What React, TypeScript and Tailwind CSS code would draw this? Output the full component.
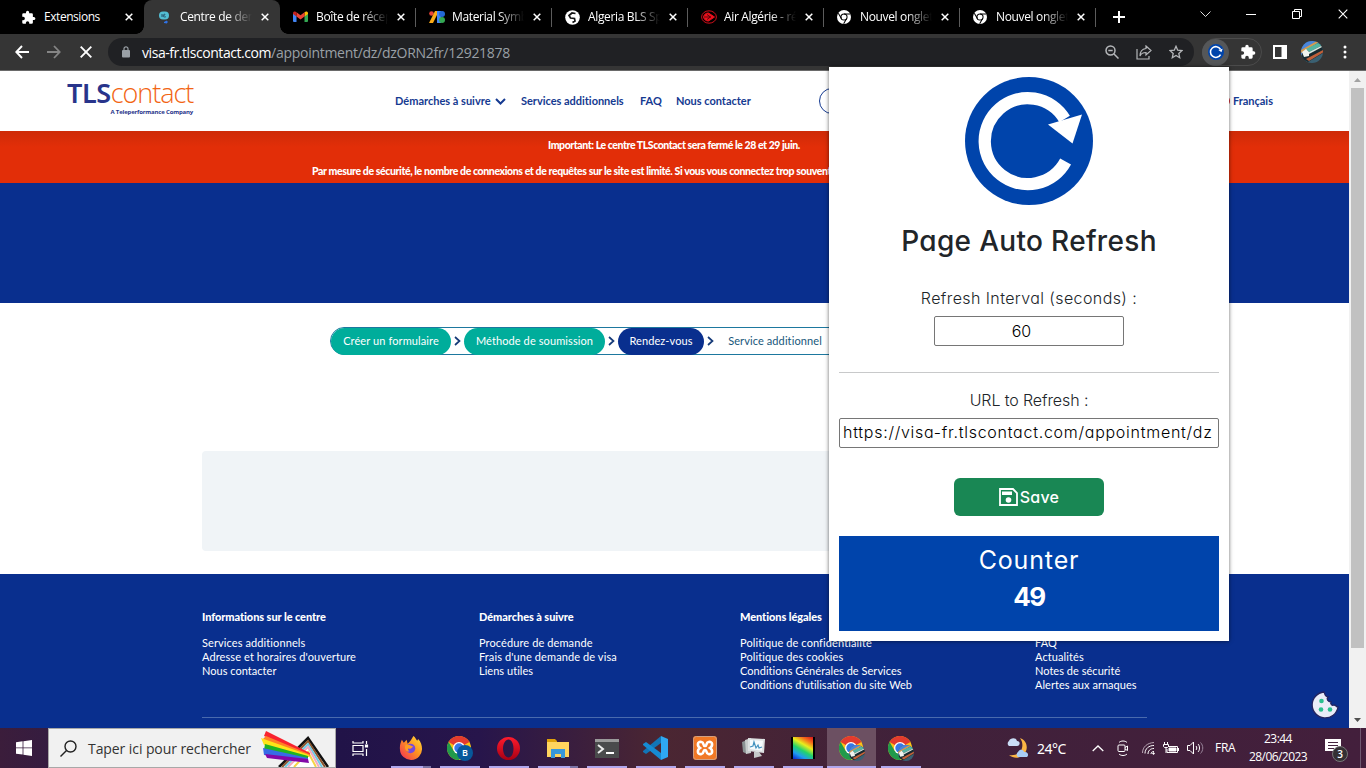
import React from "react";

const UI = "font-['Open_Sans','Noto_Sans',sans-serif]";
const SITE = "font-['Lato',sans-serif]";
const POP = "font-['Inter',sans-serif] [font-feature-settings:'cv11','ss03']";

const PUZZLE =
  "M20.5 11H19V7a2 2 0 0 0-2-2h-4V3.500a2.500 2.500 0 0 0-5 0V5H4a2 2 0 0 0-2 2v3.800h1.500a2.700 2.700 0 0 1 0 5.400H2V20a2 2 0 0 0 2 2h3.800v-1.500a2.700 2.700 0 0 1 5.400 0V22H17a2 2 0 0 0 2-2v-4h1.500a2.500 2.500 0 0 0 0-5z";

function Puzzle({ size }: { size: number }) {
  return (
    <svg width={size} height={size} viewBox="0 0 24 24" fill="#fff">
      <path d={PUZZLE} />
    </svg>
  );
}

function ChromeMono() {
  return (
    <svg width="14" height="14" viewBox="0 0 16 16">
      <circle cx="8" cy="8" r="8" fill="#fff" />
      <circle cx="8" cy="8" r="3.500" fill="none" stroke="#000" strokeWidth="1.200" />
      <path d="M8 4.500h7.200M5 9.800L1.500 3.800M11 9.800L7.600 15.700" stroke="#000" strokeWidth="1.200" />
    </svg>
  );
}

function Train({ size, id }: { size: number; id: string }) {
  return (
    <svg width={size} height={size} viewBox="0 0 22 22">
      <clipPath id={id}>
        <circle cx="11" cy="11" r="11" />
      </clipPath>
      <g clipPath={`url(#${id})`}>
        <path d="M0 0h22v22H0z" fill="#3a6072" />
        <path d="M0 0h22v4L0 14z" fill="#4a86dc" />
        <path d="M0 9L16 0h4L0 12z" fill="#d49a4d" />
        <path d="M1 12L17 2l5 3v7L7 21l-6-3z" fill="#182a30" />
        <path d="M5 8L17 2l5 2-14 7z" fill="#53b5a1" />
        <path d="M1 11l4-3 3 3v4l-5 1z" fill="#f0f3ee" />
        <path d="M8 11l14-7v1.500L8 13z" fill="#d7e6df" />
        <path d="M5 18L22 9v2.500L8 20z" fill="#c0603a" />
      </g>
    </svg>
  );
}

function ChromeIcon({ badge, id }: { badge: "B" | "train"; id: string }) {
  return (
    <div className="relative h-[25px] w-[25px]">
      <svg width="24" height="24" viewBox="0 0 24 24">
        <circle cx="12" cy="12" r="12" fill="#fbc116" />
        <path d="M12 12L1.600 6A12 12 0 0 1 22.400 6z" fill="#e33b2e" />
        <path d="M1.600 6A12 12 0 0 0 12 24l5.200-9H6.800z" fill="#229a4b" />
        <circle cx="12" cy="12" r="6" fill="#fff" />
        <circle cx="12" cy="12" r="4.700" fill="#3778e6" />
      </svg>
      {badge === "B" ? (
        <span className={`absolute left-[10px] top-[9px] flex h-4 w-4 items-center justify-center rounded-full bg-[#07579b] text-[9px] font-semibold text-white ${UI}`}>B</span>
      ) : (
        <span className="absolute left-[10px] top-[9px]">
          <Train size={16} id={id} />
        </span>
      )}
    </div>
  );
}

function Cross({ size, w = 1.5 }: { size: number; w?: number }) {
  return (
    <svg width={size} height={size} viewBox={`0 0 ${size} ${size}`} stroke="#fff" strokeWidth={w} fill="none">
      <path d={`M.7.7L${size - 0.7} ${size - 0.7}M${size - 0.7}.7L.7 ${size - 0.7}`} />
    </svg>
  );
}

const tabs = [
  { t: "Extensions", icon: <Puzzle size={15} /> },
  {
    t: "Centre de dem",
    active: true,
    icon: (
      <svg width="16" height="16" viewBox="0 0 16 16">
        <rect x="2" y="2.500" width="10" height="8" rx="4" fill="#53bed3" />
        <path d="M5 5v3M6.500 5.500c2-1 2 1 0 1s1 2.500 2.500 1" stroke="#24516b" fill="none" />
        <path d="M7 13.500l3-1.500v2z" fill="#2f75ec" stroke="#2f75ec" />
      </svg>
    ),
  },
  {
    t: "Boîte de récept",
    icon: (
      <svg width="15" height="12" viewBox="0 0 15 12">
        <path d="M0 2l3.500 2.600V11H1a1 1 0 0 1-1-1z" fill="#4285f4" />
        <path d="M15 2l-3.500 2.600V11H14a1 1 0 0 0 1-1z" fill="#34a853" />
        <path d="M11.500 1.200C13 0 15 .5 15 2.200V3l-3.500 2.600z" fill="#fbbc04" />
        <path d="M3.500 1.200l4 3 4-3v4.400l-4 3-4-3z" fill="#ea4335" />
        <path d="M0 2.200C0 .5 2 0 3.500 1.200v4.400L0 3z" fill="#c5221f" />
      </svg>
    ),
  },
  {
    t: "Material Symbo",
    icon: (
      <svg width="16" height="12" viewBox="0 0 16 12">
        <circle cx="2.500" cy="2.500" r="2.300" fill="#ea4335" />
        <path d="M6 0h4L4 12H0z" fill="#fbab16" />
        <path d="M8 0h4v12H8z" fill="#4285f4" />
        <circle cx="13" cy="3" r="3" fill="#2369d6" />
        <circle cx="13" cy="9" r="3" fill="#34a853" />
      </svg>
    ),
  },
  {
    t: "Algeria BLS Spa",
    icon: (
      <svg width="15" height="15" viewBox="0 0 15 15">
        <circle cx="7.500" cy="7.500" r="7.300" fill="#fff" />
        <path d="M10.500 3.500L7 3 4 5.500 5.500 8l4 .5.5 2.500-2.500 1.500" stroke="#151515" strokeWidth="1.700" fill="none" />
      </svg>
    ),
  },
  {
    t: "Air Algérie - rés",
    icon: (
      <svg width="16" height="16" viewBox="0 0 16 16" fill="none" stroke="#e5101c">
        <ellipse cx="8" cy="8" rx="7.400" ry="6.200" strokeWidth=".9" />
        <path d="M2.500 8c1-4 4-4 5-4l6 4-6 4c-1 0-4 0-5-4z" fill="#f0101c" />
        <path d="M3 8h7M6 5.500L9.500 8 6 10.500" stroke="#260004" strokeWidth=".7" />
      </svg>
    ),
  },
  { t: "Nouvel onglet", icon: <ChromeMono /> },
  { t: "Nouvel onglet", icon: <ChromeMono /> },
];

function TabStrip() {
  return (
    <div className={`flex h-[34px] bg-black pl-2 text-white ${UI}`}>
      {tabs.map((tab, i) => (
        <div
          key={i}
          className={
            tab.active
              ? "relative flex h-[34px] w-[136px] shrink-0 items-center rounded-t-lg bg-[#353535] pl-[13px]"
              : "relative flex h-[34px] w-[136px] shrink-0 items-center pl-[13px]"
          }
        >
          {tab.active && (
            <>
              <span className="absolute -left-2 bottom-0 h-2 w-2 bg-[radial-gradient(circle_at_0_0,transparent_7.500px,#353535_8px)]" />
              <span className="absolute -right-2 bottom-0 h-2 w-2 bg-[radial-gradient(circle_at_0_0,transparent_7.500px,#353535_8px)] -scale-x-100" />
            </>
          )}
          <span className="flex w-[23px]">{tab.icon}</span>
          <span
            className={
              i === 0
                ? "w-[73px] overflow-hidden whitespace-nowrap text-[12px] tracking-[-0.45px]"
                : "w-[73px] overflow-hidden whitespace-nowrap text-[12px] tracking-[-0.35px] [mask-image:linear-gradient(to_right,#000_46px,transparent_72px)]"
            }
          >
            {tab.t}
          </span>
          <span className="ml-[8px]">
            <Cross size={8} />
          </span>
          {i > 1 && <span className="absolute right-0 top-2 h-[19px] w-px bg-[#5c5c5c]" />}
        </div>
      ))}
      <div className="flex h-[34px] w-[46px] items-center justify-center">
        <svg width="12" height="12" viewBox="0 0 12 12" stroke="#fff" strokeWidth="2"><path d="M6 0v12M0 6h12" /></svg>
      </div>
      <div className="ml-auto flex h-7">
        <div className="flex w-[46px] items-center justify-center">
          <svg width="11" height="7" viewBox="0 0 11 7" fill="none" stroke="#ddd"><path d="M.5.5l5 5 5-5" /></svg>
        </div>
        <div className="flex w-[46px] items-center justify-center">
          <svg width="10" height="2" viewBox="0 0 10 2"><path d="M0 1h10v1H0z" fill="#fff" /></svg>
        </div>
        <div className="flex w-[46px] items-center justify-center">
          <svg width="10" height="10" viewBox="0 0 10 10" fill="none" stroke="#fff"><path d="M.5 2.500h7v7h-7zM2.500 2.500v-2h7v7h-2" /></svg>
        </div>
        <div className="flex w-[46px] items-center justify-center">
          <Cross size={10} w={1.1} />
        </div>
      </div>
    </div>
  );
}

function Toolbar() {
  return (
    <div className={`flex h-9 items-center bg-[#353535] pl-[15px] ${UI}`}>
      <svg width="14" height="14" viewBox="0 0 14 14" fill="none" stroke="#fff" strokeWidth="1.900"><path d="M14 7H1.500M7 1L1.300 7 7 13" /></svg>
      <svg className="ml-[18px]" width="14" height="14" viewBox="0 0 14 14" fill="none" stroke="#858585" strokeWidth="1.800"><path d="M0 7h12.500M7 1l5.700 6L7 13" /></svg>
      <span className="ml-[19px]"><Cross size={12} w={1.9} /></span>
      <div className="ml-[16px] flex h-7 w-[1086px] items-center rounded-full bg-[#202124] pl-[14px]">
        <svg width="8" height="12" viewBox="0 0 8 12"><rect y="4" width="8" height="7.500" rx="1" fill="#9aa0a6" /><path d="M2 4.500V2.800a2 2 0 0 1 4 0v1.700" fill="none" stroke="#9aa0a6" strokeWidth="1.200" /></svg>
        <span className="ml-[12px] whitespace-nowrap text-[14px] text-[#9aa0a6]">
          <span className="tracking-[-0.44px] text-white">visa-fr.tlscontact.com</span>
          <span className="tracking-[-0.28px]">/appointment/dz/dzORN2fr/12921878</span>
        </span>
        <div className="ml-auto flex items-center pr-[11px]">
          <svg width="14" height="14" viewBox="0 0 14 14" fill="none" stroke="#b5b7ba" strokeWidth="1.500"><circle cx="5.500" cy="5.500" r="4.500" /><path d="M9 9l4.500 4.500M3.300 5.500h4.400" /></svg>
          <svg className="ml-[17px]" width="16" height="15" viewBox="0 0 16 15" fill="none" stroke="#b5b7ba" strokeWidth="1.200"><path d="M1 4v10h12v-3M10 1l5 4.500L10 10V7.500C7 7.500 5 8.500 4 11c0-4 2-7 6-7.500z" /></svg>
          <svg className="ml-[17px]" width="14" height="14" viewBox="0 0 14 14" fill="none" stroke="#b5b7ba" strokeWidth="1.300"><path d="M7 1.300l1.700 3.900 4.300.4-3.200 2.900.9 4.200L7 10.500l-3.700 2.200.9-4.200L1 5.600l4.300-.4z" /></svg>
        </div>
      </div>
      <div className="ml-[8px] flex h-7 w-[60px] items-center rounded-full border border-[#4b4b4b]">
        <span className="-ml-px flex h-[27px] w-[27px] items-center justify-center rounded-full bg-[#555759]">
          <RefreshLogo size={16} />
        </span>
        <span className="ml-[11px]"><Puzzle size={16} /></span>
      </div>
      <svg className="ml-[11px]" width="14" height="14" viewBox="0 0 14 14"><path d="M0 0h14v14H0zM2 2v10h6.500V2z" fill="#fff" fillRule="evenodd" /></svg>
      <span className="ml-[14px]"><Train size={22} id="av" /></span>
      <svg className="ml-[20px]" width="4" height="14" viewBox="0 0 4 14" fill="#fff"><circle cx="2" cy="2" r="1.500" /><circle cx="2" cy="7" r="1.500" /><circle cx="2" cy="12" r="1.500" /></svg>
    </div>
  );
}

function RefreshLogo({ size }: { size: number }) {
  return (
    <svg width={size} height={size} viewBox="0 0 128 128">
      <circle cx="64" cy="64" r="64" fill="#0044ab" />
      <path d="M99.600 42A43 43 0 1 0 100.600 84.500" fill="none" stroke="#fff" strokeWidth="12.300" />
      <path d="M117 37.500L83 47.500l24.500 19z" fill="#fff" />
    </svg>
  );
}

const steps = [
  { t: "Créer un formulaire", c: "flex h-[27px] w-[120px] items-center justify-center rounded-full bg-[#00ad9b] text-white" },
  { t: "Méthode de soumission", c: "flex h-[27px] w-[141px] items-center justify-center rounded-full bg-[#00ad9b] text-white" },
  { t: "Rendez-vous", c: "flex h-[27px] w-[86px] items-center justify-center rounded-full bg-[#092f8e] text-white" },
  { t: "Service additionnel", c: "flex h-[27px] w-[116px] items-center justify-center text-[#17577b]" },
];

const footer = [
  { w: "w-[277px]", h: "Informations sur le centre", l: ["Services additionnels", "Adresse et horaires d'ouverture", "Nous contacter"] },
  { w: "w-[261px]", h: "Démarches à suivre", l: ["Procédure de demande", "Frais d'une demande de visa", "Liens utiles"] },
  { w: "w-[295px]", h: "Mentions légales", l: ["Politique de confidentialité", "Politique des cookies", "Conditions Générales de Services", "Conditions d'utilisation du site Web"] },
  { w: "w-[110px]", h: "Informations", l: ["FAQ", "Actualités", "Notes de sécurité", "Alertes aux arnaques"] },
];

function Site() {
  return (
    <div className={`relative flex w-[1349px] flex-col bg-white text-[11px] ${SITE}`}>
      <header className="flex h-[60px] text-[#153a91]">
        <div className="flex w-[395px] flex-col pl-[67px] pt-[8px]">
          <div className="flex items-baseline whitespace-nowrap font-['Noto_Sans',sans-serif] text-[27px] leading-[28px]">
            <span className="font-semibold tracking-[-0.4px] text-[#28348b]">TLS</span>
            <span className="font-['Open_Sans',sans-serif] text-[27px] font-light tracking-[-1.050px] text-[#f26514]">contact</span>
          </div>
          <div className="mt-px w-[126px] text-right font-['Open_Sans',sans-serif] text-[6px] font-bold leading-[8px] tracking-[-0.17px] text-[#28348b]">A Teleperformance Company</div>
        </div>
        <nav className="flex items-center whitespace-nowrap font-bold tracking-[-0.02px]">
          <span className="flex w-[126px] items-center">
            <span className="tracking-[0px]">Démarches à suivre</span>
            <svg className="ml-[4px]" width="11" height="7" viewBox="0 0 11 7" fill="none" stroke="#153a91" strokeWidth="2"><path d="M1 1l4.500 4.500L10 1" /></svg>
          </span>
          <span className="w-[119px]">Services additionnels</span>
          <span className="w-[36px]">FAQ</span>
          <span className="w-[143px]">Nous contacter</span>
          <span className="h-[26px] w-[120px] rounded-full border border-[#153a91]" />
          <span className="ml-[275px] h-3 w-4 rounded-full bg-[#d22630]" />
          <span className="ml-[3px]">Français</span>
        </nav>
      </header>
      <div className="flex h-[52px] flex-col bg-[linear-gradient(to_bottom,#ce2b08,#e22e08_16px)] text-[10.500px] font-black text-white">
        <p className="whitespace-nowrap pl-[548px] pt-[5px] leading-[18px] tracking-[-0.43px]">Important: Le centre TLScontact sera fermé le 28 et 29 juin.</p>
        <p className="overflow-hidden whitespace-nowrap pl-[312px] pt-[8px] leading-[18px] tracking-[-0.39px]">Par mesure de sécurité, le nombre de connexions et de requêtes sur le site est limité. Si vous vous connectez trop souvent</p>
      </div>
      <div className="h-[120px] bg-[#092f8e]" />
      <div className="flex h-[271px] flex-col pt-6">
        <div className="ml-[330px] flex h-[28px] w-[690px] items-center rounded-full border border-[#1d789f] tracking-[0.1px]">
          {steps.map((s) => (
            <React.Fragment key={s.t}>
              <span className={s.c}>{s.t}</span>
              <span className="flex w-[13px] justify-center">
                <svg width="7" height="10" viewBox="0 0 7 10" fill="none" stroke="#153a78" strokeWidth="1.700"><path d="M1 1l4.500 4L1 9" /></svg>
              </span>
            </React.Fragment>
          ))}
        </div>
        <div className="ml-[202px] mt-[96px] h-[100px] w-[945px] rounded bg-[#f0f4f7]" />
      </div>
      <footer className="flex h-[154px] flex-col bg-[#092f8e] px-[202px] pt-[36px] text-white">
        <div className="flex h-[107px]">
          {footer.map((f) => (
            <div key={f.h} className={`${f.w} shrink-0 whitespace-nowrap leading-[14px]`}>
              <h3 className="mb-3 font-black tracking-[-0.08px]">{f.h}</h3>
              {f.l.map((x, i) => (
                <p key={x} className={i > 1 ? "tracking-[0.03px]" : "tracking-[0.1px]"}>{x}</p>
              ))}
            </div>
          ))}
        </div>
        <div className="h-px bg-[#496aae]" />
      </footer>
      <svg className="absolute bottom-[9px] right-[10px]" width="28" height="28" viewBox="0 0 28 28">
        <path d="M13 1a13 13 0 1 0 14 15c-2 0-2-2-4-2-2 1-4-1-3-3-3 0-5-3-3-5-3 0-3-3-4-5z" fill="#e9ecf7" stroke="#24245f" strokeWidth="1.300" />
        <circle cx="10.500" cy="10" r="2.300" fill="#29bf8e" /><circle cx="10" cy="18.500" r="2.300" fill="#29bf8e" /><circle cx="19" cy="18.500" r="2.300" fill="#29bf8e" />
      </svg>
    </div>
  );
}

function Popup() {
  return (
    <section className={`absolute left-[829px] top-[67px] flex h-[574px] w-[400px] flex-col items-center bg-white px-[10px] pt-[10px] text-[#212529] shadow-[0_0_4px_rgba(0,0,0,0.6)] ${POP}`}>
      <RefreshLogo size={128} />
      <h1 className="mt-[18px] whitespace-nowrap text-[28px] font-medium leading-[36px] tracking-[0.32px]">Page Auto Refresh</h1>
      <label className="mt-[27px] whitespace-nowrap text-[16px] font-light leading-6 tracking-[0.4px]">Refresh Interval (seconds) :</label>
      <div className="mt-[6px] flex h-[30px] w-[190px] items-center justify-center rounded-[2px] border border-[#767676] pb-px pr-[15px] text-[16px] font-light text-black">60</div>
      <div className="mt-[26px] h-px w-full bg-[#c8c9ca]" />
      <label className="mt-[15px] whitespace-nowrap text-[16px] font-light leading-6 tracking-[-0.1px]">URL to Refresh :</label>
      <div className="mt-[6px] h-[30px] w-full rounded-[2px] border border-[#767676] px-[3px]">
        <div className="overflow-hidden whitespace-nowrap text-[16px] font-light leading-[27px] tracking-[0.73px] text-black">https://visa-fr.tlscontact.com/appointment/dz</div>
      </div>
      <button className="mt-[30px] flex h-[38px] w-[150px] shrink-0 items-center justify-center rounded-md bg-[#198754] pb-px text-[16px] font-medium tracking-[0.2px] text-white">
        <svg className="mr-[2px]" width="19" height="18" viewBox="0 0 19 18"><path d="M1 1h13l4 4v12H1z" fill="none" stroke="#fff" strokeWidth="1.800" /><path d="M3 3.500h10v3.500H3z" fill="#fff" /><circle cx="9.500" cy="12" r="2.800" fill="#fff" /></svg>
        Save
      </button>
      <div className="mt-[20px] flex h-[95px] w-full flex-col items-center bg-[#0044ab] text-white">
        <span className="mt-[6px] text-[25px] leading-9 tracking-[0.85px]">Counter</span>
        <span className="text-[26px] font-bold leading-[38px] tracking-[-1.500px]">49</span>
      </div>
    </section>
  );
}

const apps = [
  {
    k: "firefox",
    two: true,
    el: (
      <svg width="23" height="24" viewBox="0 0 24 25">
        <defs><linearGradient id="ff" x1="1" y1="0" x2="0" y2="1"><stop offset="0" stopColor="#ffe23c" /><stop offset=".45" stopColor="#ff9420" /><stop offset="1" stopColor="#f0275b" /></linearGradient></defs>
        <path d="M15 0c2 1 3 4 4 5l1-2c3 3 4 7 4 10a11.500 11.500 0 0 1-23 1C.5 10 2 6 3 4l2 3 3-3 1 4c3-2 4-5 6-8z" fill="url(#ff)" />
        <circle cx="12" cy="13" r="5" fill="#744add" /><path d="M7 9c3-1 5 1 8 2-2 1-2 3-5 2-1 0-1 2 1 3-4 1-6-4-4-7z" fill="#ff9c22" />
      </svg>
    ),
  },
  { k: "chrome-b", el: <ChromeIcon badge="B" id="t0" /> },
  {
    k: "opera",
    el: (
      <svg width="23" height="23" viewBox="0 0 23 23"><defs><linearGradient id="op" x1="0" y1="0" x2="0" y2="1"><stop stopColor="#ff1b2d" /><stop offset="1" stopColor="#a70014" /></linearGradient></defs><path fillRule="evenodd" d="M11.500 0a11.500 11.500 0 1 0 0 23 11.500 11.500 0 0 0 0-23zm0 2.500c3 0 5 4 5 9s-2 9-5 9-5.500-4-5.500-9 2.500-9 5.500-9z" fill="url(#op)" /></svg>
    ),
  },
  {
    k: "files",
    two: true,
    el: (
      <svg width="22" height="19" viewBox="0 0 22 19"><path d="M0 0h8l2 2v4H0z" fill="#dfa10a" /><path d="M0 3h22v15H0z" fill="#ffd45e" /><path d="M4 19v-9h14v9h-4v-4H8v4z" fill="#3897da" /></svg>
    ),
  },
  {
    k: "terminal",
    el: (
      <svg width="24" height="19" viewBox="0 0 24 19"><path d="M0 0h24v19H0z" fill="#4a4b4c" /><path d="M0 0h24v3H0z" fill="#9a9a9a" /><path d="M3 6l5 4-5 4" fill="none" stroke="#eee" strokeWidth="2" /><path d="M11 14h8" stroke="#fff" strokeWidth="2" /></svg>
    ),
  },
  {
    k: "code",
    el: (
      <svg width="25" height="24" viewBox="0 0 25 24"><path d="M18 0v7L3 18 0 16v-1z" fill="#1175b7" /><path d="M18 24v-7L3 6 0 8v1z" fill="#168bd3" /><path d="M18 0l7 3v18l-7 3z" fill="#2fa8f2" /></svg>
    ),
  },
  {
    k: "xampp",
    el: (
      <svg width="24" height="24" viewBox="0 0 24 24"><rect width="24" height="24" rx="3" fill="#f17825" /><rect x=".5" y=".5" width="23" height="23" rx="3" fill="none" stroke="#d1a083" /><path d="M8.500 6C4 5 4 10 7 12c-3 2-3 7 1.500 6 3-.5 1-4 3.500-4s.5 3.500 3.500 4c4.500 1 4.500-4 1.500-6 3-2 3-7-1.500-6-3 .5-1 4-3.500 4s-.5-3.500-3.500-4z" fill="none" stroke="#fff" strokeWidth="2.600" /></svg>
    ),
  },
  {
    k: "monitor",
    el: (
      <svg width="23" height="22" viewBox="0 0 23 22"><path d="M0 5l5-2v14l-4-2z" fill="#8b9294" /><path d="M3 3l6-2v15l-5 1z" fill="#c7cbcc" /><path d="M6 1l17 1-1 14-16-2z" fill="#dde1e2" /><path d="M8 3l13 .7-1 10L8 12z" fill="#f6fbfd" /><path d="M8 10l3-1 1-4 2 6 2-3 1 3 3-1" fill="none" stroke="#4292bf" strokeWidth="1.200" /><path d="M12 15h5l3 4-8 2z" fill="#c6c9ca" /></svg>
    ),
  },
  {
    k: "gradient",
    el: (
      <div className="flex h-[22px] w-6 border-x-2 border-dotted border-black bg-black"><span className="h-full w-full bg-[linear-gradient(30deg,#0b22cf,#1f9cf0_22%,#22d36b_42%,#e8ee1d_62%,#f5721b_80%,#d9101c)]" /></div>
    ),
  },
  { k: "chrome-1", active: true, el: <ChromeIcon badge="train" id="t1" /> },
  { k: "chrome-2", el: <ChromeIcon badge="train" id="t2" /> },
];

function Taskbar() {
  return (
    <div className={`flex h-10 bg-[linear-gradient(to_right,#3b1d3b_0,#351c40_48px,#211348_340px,#27154b_480px,#4b2632_660px,#40213a_900px,#431f3c_1366px)] text-white ${UI}`}>
      <div className="flex w-12 items-center justify-center">
        <svg width="16" height="16" viewBox="0 0 16 16" fill="#fff"><path d="M0 2.200l6.600-.9v6.200H0zM7.400 1.200L16 0v7.500H7.400zM0 8.300h6.600v6.200L0 13.700zM7.400 8.300H16V16l-8.600-1.200z" /></svg>
      </div>
      <div className="flex w-[288px] items-center border border-[#a8a8a8] bg-[#f1f1f1] pl-[11px]">
        <svg width="17" height="17" viewBox="0 0 17 17" fill="none" stroke="#222" strokeWidth="1.400"><circle cx="10.500" cy="6.500" r="5.500" /><path d="M6.500 10.500l-6 6" /></svg>
        <span className="ml-[11px] w-[164px] whitespace-nowrap text-[14px] tracking-[-0.08px] text-[#333]">Taper ici pour rechercher</span>
        <svg className="self-start" width="80" height="38" viewBox="0 0 80 38">
          <path d="M27 38L56 9l12 29" fill="#fff" />
          <path d="M27 38L56 9l20 29" fill="none" stroke="#111" strokeWidth="2.500" /><path d="M30 38l26-26 17 26" fill="none" stroke="#8a532b" strokeWidth="2" /><path d="M33 38l23-23 14 23" fill="none" stroke="#70cbe4" strokeWidth="2" /><path d="M36 38l20-20 11 20" fill="none" stroke="#f4a9bd" strokeWidth="2" /><path d="M42 38l14-15 8 15" fill="none" stroke="#f4d546" strokeWidth="2" />
          <path d="M14 2l44 22-1 4L12 7z" fill="#f9232e" /><path d="M14 7l43 18v3L10 11z" fill="#ff8125" /><path d="M9 9l48 17v2L12 16z" fill="#ffe417" /><path d="M13 15l43 12v3L12 21z" fill="#21b322" /><path d="M11 19l45 10v2L12 26z" fill="#376be7" /><path d="M13 25l43 5 1 4-42-5z" fill="#8308a7" />
        </svg>
      </div>
      <div className="flex w-[50px] items-center justify-center">
        <svg className="mr-[2px]" width="17" height="17" viewBox="0 0 17 17" fill="none" stroke="#fff" strokeWidth="1.200"><path d="M1 1v2h10V1M1 5.500h10v6H1zM1 16v-2h10v2M14.500 1v3M14.500 9v7" /><path d="M13.500 5h2v2h-2z" fill="#fff" /></svg>
      </div>
      {apps.map((a) => (
        <div key={a.k} className={a.active ? "relative flex w-[49px] items-center justify-center bg-[#6c5062]" : "relative flex w-[49px] items-center justify-center"}>
          {a.el}
          <span className={a.active ? "absolute bottom-0 left-0 h-[2px] w-full bg-[#b0a7ed]" : "absolute bottom-0 left-[5px] h-[2px] w-10 bg-[#b0a7ed]"} />
          {a.two && <span className="absolute bottom-0 left-[37px] h-[2px] w-2 bg-[#7b73a5]" />}
        </div>
      ))}
      <div className="ml-[80px] flex items-center">
        <svg width="24" height="23" viewBox="0 0 24 23"><path d="M15 1c6 2 8 8 6 13-3 7-11 9-17 4 7 1 12-2 13-7 1-4 0-7-2-10z" fill="#fbb544" /><path d="M4 9a3 3 0 0 1 0-5c1-3 7-4 8 0 4 0 3 5 0 5z" fill="#c9ddf6" /><path d="M13 20a3 3 0 0 1 0-5c2-4 6-2 6 0 5-1 5 5 2 5z" fill="#a9cef6" /></svg>
        <span className="ml-[8px] w-[55px] whitespace-nowrap font-['Noto_Sans',sans-serif] text-[14px] tracking-[-0.5px]">24°C</span>
        <svg width="12" height="7" viewBox="0 0 12 7" fill="none" stroke="#fff" strokeWidth="1.300"><path d="M.7 6L6 1l5.300 5" /></svg>
        <svg className="ml-[13px]" width="12" height="16" viewBox="0 0 12 16" fill="none" stroke="#fff"><rect x="1" y="5" width="7" height="6.500" rx="1" /><path d="M8 7.500l2.500-1.500v4.500L8 9M2 2.500c2-2 6-2 8 0M2 14c2 2 6 2 8 0" /></svg>
        <svg className="ml-[12px]" width="14" height="14" viewBox="0 0 14 14" fill="none" stroke="#fff"><path d="M1.500 12C1.500 6 6 2 13 1.500" stroke="#b7a5b3" /><path d="M4 12.500c0-5 4-8 9-8M7 13c0-3 2-5.500 6-5.500M10 13c0-1.500 1-2.500 3-2.500" /><circle cx="12.500" cy="12.500" r=".8" fill="#fff" /></svg>
        <svg className="ml-[8px]" width="16" height="12" viewBox="0 0 16 12" fill="none" stroke="#fff"><path d="M5 4.500h9.500v6H4V7M1.500 0v2.500M4.500 0v2.500M.5 2.500h5v2l-1 1h-3l-1-1zM3 6v5M15.500 6v3" /><path d="M6 6h7v3H6z" fill="#fff" /></svg>
        <svg className="ml-[8px]" width="17" height="14" viewBox="0 0 17 14" fill="none" stroke="#fff"><path d="M.5 4.500H3L6.500 1v12L3 9.500H.5zM9 5c1 1 1 3 0 4M11 3c2 2 2 6 0 8" /><path d="M13.500 1.500c3 3 3 8 0 11" stroke="#99849a" /></svg>
        <span className="ml-[11px] w-[34px] text-[12px] tracking-[-0.3px]">FRA</span>
        <div className="flex w-[58px] flex-col items-center whitespace-nowrap text-[12px] leading-[18px] tracking-[-0.55px]">
          <span>23:44</span><span>28/06/2023</span>
        </div>
        <div className="relative ml-[18px] h-[20px] w-6">
          <svg width="17" height="17" viewBox="0 0 17 17"><path d="M0 1h16v12h-4v4l-4-4H0z" fill="#fff" /><path d="M3 4.500h10M3 7.500h10M3 10.500h6" stroke="#462640" /></svg>
          <span className="absolute left-[7px] top-[8px] flex h-4 w-4 items-center justify-center rounded-full border border-[#777] bg-[#343034] text-[10px] font-semibold">3</span>
        </div>
        <span className="ml-[11px] h-10 w-px bg-[#6f5870]" />
      </div>
    </div>
  );
}

export default function App() {
  return (
    <main className="relative flex h-[768px] w-[1366px] flex-col overflow-hidden">
      <TabStrip />
      <Toolbar />
      <div className="h-px bg-[#6a6a6a]" />
      <div className="flex h-[657px]">
        <Site />
        <div className="flex w-[17px] flex-col items-center bg-[#f1f1f1]">
          <span className="flex h-[17px] items-center"><svg width="7" height="4" viewBox="0 0 7 4"><path d="M0 4l3.500-4L7 4z" fill="#a3a3a3" /></svg></span>
          <span className="h-[560px] w-[13px] bg-[#c1c1c1]" />
          <span className="mt-auto flex h-[17px] items-center"><svg width="7" height="4" viewBox="0 0 7 4"><path d="M0 0l3.500 4L7 0z" fill="#505050" /></svg></span>
        </div>
      </div>
      <Taskbar />
      <Popup />
    </main>
  );
}
